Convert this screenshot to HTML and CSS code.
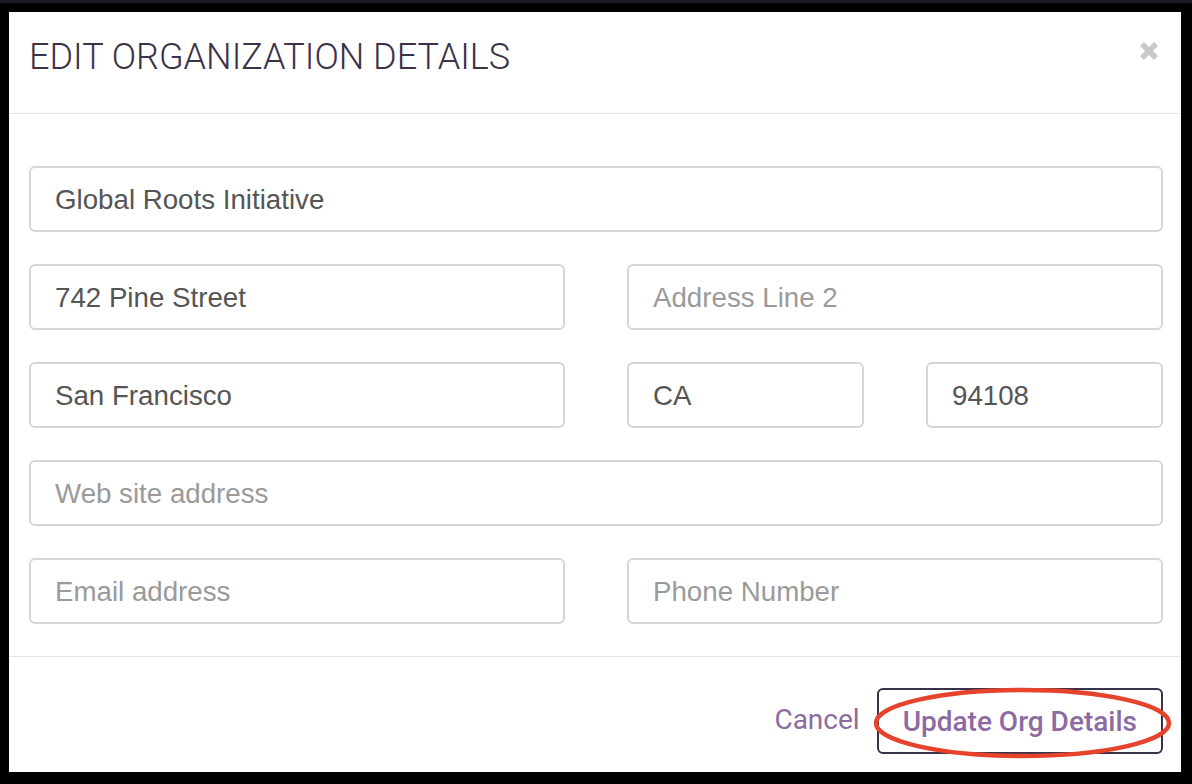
FILE: index.html
```html
<!DOCTYPE html>
<html>
<head>
  <title>Edit Organization Details</title>
  <link rel="stylesheet" href="styles.css">
</head>
<body>
  <div class="modal">
    <div class="modal-header">
      <h3 class="modal-title">EDIT ORGANIZATION DETAILS</h3>
      <svg class="close" viewBox="0 0 20 20">
        <path d="M3 3 L17 17 M17 3 L3 17" stroke="#c9c9c9" stroke-width="5.5" stroke-linecap="butt"/>
      </svg>
    </div>

    <form class="modal-body">
      <input class="field span-4" type="text" value="Global Roots Initiative">

      <input class="field span-2" type="text" value="742 Pine Street">
      <input class="field span-2" type="text" placeholder="Address Line 2">

      <input class="field span-2" type="text" value="San Francisco">
      <input class="field" type="text" value="CA">
      <input class="field" type="text" value="94108">

      <input class="field span-4" type="text" placeholder="Web site address">

      <input class="field span-2" type="text" placeholder="Email address">
      <input class="field span-2" type="text" placeholder="Phone Number">
    </form>

    <div class="modal-footer">
      <a class="btn-link" href="#">Cancel</a>
      <button class="btn-update" type="button">
        Update Org Details
        <svg class="ring" viewBox="0 0 300 72" preserveAspectRatio="none">
          <ellipse cx="150" cy="36" rx="147" ry="33" fill="none" stroke="#e5432c" stroke-width="4.5"/>
        </svg>
      </button>
    </div>
  </div>
</body>
</html>
```

FILE: styles.css
```css
/* modal sitting on a black backdrop */
body {
  margin: 0;
  background: #000;
  border-top: 3px solid #1d1c23;
  padding: 9px 11px 12px 9px;
  font-family: Roboto, "Liberation Sans", sans-serif;
}

.modal {
  background: #fff;
  height: 760px;
  display: flex;
  flex-direction: column;
}

.modal-header {
  box-sizing: border-box;
  height: 102px;
  border-bottom: 1px solid #e5e5e5;
  display: flex;
  align-items: flex-start;
  justify-content: space-between;
  padding: 24px 22px 0 20px;
}

.modal-title {
  margin: 0;
  font-size: 36px;
  line-height: 42px;
  font-weight: 300;
  color: #3b3148;
}

.close {
  width: 20px;
  height: 20px;
  margin-top: 5px;
}

.modal-body {
  display: grid;
  grid-template-columns: repeat(4, 1fr);
  column-gap: 62px;
  row-gap: 32px;
  padding: 52px 18px 32px 20px;
  border-bottom: 1px solid #e5e5e5;
}

.span-2 {
  grid-column: span 2;
}

.span-4 {
  grid-column: span 4;
}

.field {
  box-sizing: border-box;
  height: 66px;
  width: 100%;
  min-width: 0;
  padding: 2px 24px 0;
  border: 2px solid #d6d6d6;
  border-radius: 6px;
  font-family: "Liberation Sans", Arial, sans-serif;
  font-size: 27.7px;
  color: #555;
  background: #fff;
}

.field::placeholder {
  color: #9a9a9a;
}

.modal-footer {
  flex: 1;
  display: flex;
  justify-content: flex-end;
  align-items: flex-start;
  gap: 17px;
  padding: 31px 18px 0 20px;
}

.btn-link {
  color: #8c6ba3;
  text-decoration: none;
  font-size: 28px;
  line-height: 64px;
}

.btn-update {
  position: relative;
  height: 66px;
  padding: 0 24px;
  border: 2px solid #3b3148;
  border-radius: 6px;
  background: #fff;
  color: #8c6ba3;
  font-family: Roboto, sans-serif;
  font-size: 28px;
  font-weight: 500;
}

/* red highlight ring drawn over the button */
.ring {
  position: absolute;
  left: -6px;
  top: -3px;
  width: 299px;
  height: 72px;
  pointer-events: none;
}
```
